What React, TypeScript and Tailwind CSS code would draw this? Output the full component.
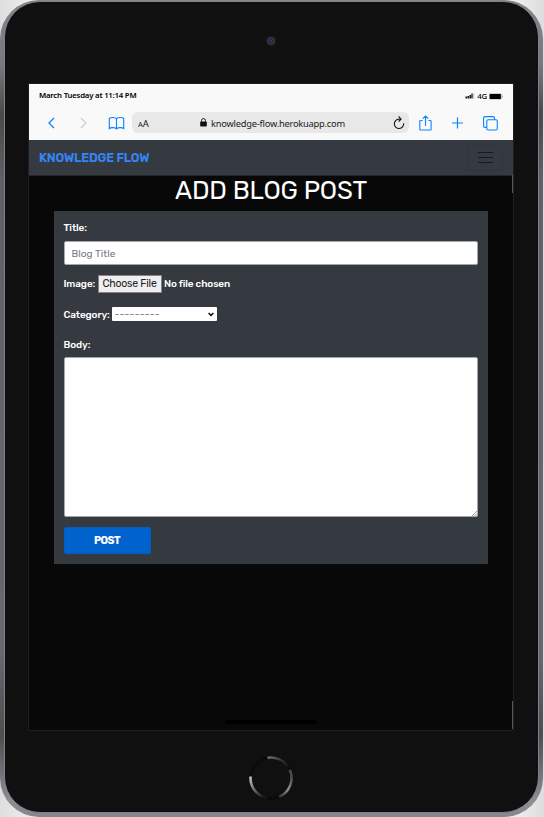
import React from "react";

const ui = "font-['Noto_Sans','Open_Sans',sans-serif]";

function StatusBar() {
  return (
    <div className={`flex h-[24px] items-center justify-between pl-[10px] pr-[10px] text-black ${ui}`}>
      <span className="mb-[3px] whitespace-nowrap text-[7.8px] font-semibold leading-[10px] tracking-[-0.220px]">March Tuesday at 11:14 PM</span>
      <div className="flex items-center">
        <svg width="10" height="6" viewBox="0 0 10 6" className="mr-[2px]">
          <rect x="0.5" y="3.5" width="1.4" height="2" />
          <rect x="2.5" y="3" width="1.4" height="2.5" />
          <rect x="4.5" y="2" width="1.4" height="3.5" />
          <rect x="6.4" y="0.5" width="1.2" height="5" />
          <rect x="8.3" y="0" width="1" height="5.5" fill="#c4c4c4" />
        </svg>
        <span className="mr-[2px] text-[7.8px] font-medium leading-[10px] tracking-[-0.2px]">4G</span>
        <svg width="14" height="7" viewBox="0 0 14 7">
          <rect x="0" y="0.5" width="12.6" height="6" rx="1" fill="#a8a8a8" />
          <rect x="0.8" y="1" width="11" height="5" rx="0.5" />
          <rect x="13" y="2.5" width="0.7" height="2" fill="#888" />
        </svg>
      </div>
    </div>
  );
}

function Toolbar() {
  return (
    <div className={`flex h-[32px] pt-[4px] text-[#0a84ff] ${ui}`}>
      <svg className="shrink-0" width="103" height="22" viewBox="0 0 103 22" fill="none" stroke="currentColor" strokeWidth="1.1">
        <path d="M25 6 20 11l5 5" strokeWidth="1.3" />
        <path d="m52 6 5 5-5 5" stroke="#c9c9c9" />
        <path d="M87.500 7c-.8-1.800-5.800-2-7.200-.5v10c1.400-1.200 6.200-1.200 7.200.5 1-1.700 5.800-1.700 7.200-.5v-10c-1.400-1.500-6.400-1.300-7.200.5v10" />
      </svg>
      <div className="flex h-[21px] w-[277px] shrink-0 items-center rounded-[6px] bg-[#e8e8e8] pl-[6px] text-[#202020]">
        <span className="w-[62px] whitespace-nowrap leading-[20px]">
          <span className="text-[7.5px]">A</span><span className="text-[9.5px]">A</span>
        </span>
        <svg width="7" height="9" viewBox="0 0 7 9" className="mr-[4px]">
          <rect x="0.2" y="3.5" width="6.6" height="5" rx="0.8" fill="#111" />
          <path d="M1.500 4V2.600a2 2 0 0 1 4 0V4" fill="none" stroke="#222" strokeWidth="1" />
        </svg>
        <span className="w-[134px] whitespace-nowrap pt-[2px] text-[9.3px] leading-[20px] tracking-[-0.220px]">knowledge-flow.herokuapp.com</span>
        <svg width="14" height="16" viewBox="0 0 14 16" className="ml-[47px]" fill="none" stroke="#161616" strokeWidth="1.1">
          <path d="M11.700 8.300A4.700 4.700 0 1 1 7 4.100h1.700" />
          <path d="m6.600 1.300 2.500 2.800-2.500 2.400" />
        </svg>
      </div>
      <svg className="ml-[9px] shrink-0" width="46" height="22" viewBox="0 0 46 22" fill="none" stroke="currentColor" strokeWidth="1.1">
        <path d="M4.500 8.500H2.600a.8.8 0 0 0-.8.8v7.900a.8.8 0 0 0 .8.800h9.700a.8.8 0 0 0 .8-.800V9.300a.8.8 0 0 0-.8-.800H10.400M7.500 14V4M4.700 6.700 7.500 4l2.800 2.700" />
        <path d="M39.500 5.500v11M34 11h11" strokeWidth="1.2" />
      </svg>
      <svg className="ml-[19px] mt-[4px] shrink-0" width="16" height="16" viewBox="0 0 16 16" fill="none" stroke="currentColor" strokeWidth="1.1">
        <path d="M11.500 3.700V2A1.400 1.400 0 0 0 10.100.6H2A1.400 1.400 0 0 0 .6 2v8A1.400 1.400 0 0 0 2 11.400h1.700" />
        <rect x="3.800" y="3.700" width="10.500" height="10.300" rx="1.400" />
      </svg>
    </div>
  );
}

function Navbar() {
  return (
    <div className="flex h-[36px] items-center justify-between border-b border-[#22262b] bg-[#343a40] pl-[10px] pr-[10px]">
      <span className="whitespace-nowrap pt-px text-[12.5px] font-semibold leading-none tracking-[-0.220px] text-[#3485f7]">KNOWLEDGE FLOW</span>
      <button aria-label="Menu" className="flex h-[26px] w-[36px] flex-col items-center justify-center gap-[4px] rounded-[3px] border border-[#30363c]">
        <span className="h-px w-[15px] bg-[#171a1d]" />
        <span className="h-px w-[15px] bg-[#171a1d]" />
        <span className="h-px w-[15px] bg-[#171a1d]" />
      </button>
    </div>
  );
}

function BlogForm() {
  return (
    <form className="ml-[24.500px] mr-[25px] h-[353px] bg-[#343a40] px-[10px] text-[10px] font-medium leading-[12px] tracking-[-0.120px] text-white">
      <div className="pt-[11px]">
        <label className="block">Title:</label>
        <input placeholder="Blog Title" className="mt-[7px] block h-[24px] w-full rounded-[2px] border border-[#a4a8ad] bg-white px-[7px] pt-px text-[10px] font-normal tracking-[0.080px] text-black outline-none placeholder:text-[#74797e]" />
      </div>
      <div className="mt-[10px] flex h-[18px] items-center">
        <span className="w-[34px] whitespace-nowrap">Image:</span>
        <button type="button" className="flex h-[18px] w-[64px] items-center justify-center whitespace-nowrap border border-[#858585] bg-[#efefef] text-[10.5px] font-normal tracking-[-0.200px] text-[#222]">Choose File</button>
        <span className="ml-[2.500px] whitespace-nowrap">No file chosen</span>
      </div>
      <div className="mt-[14px] flex h-[14px] items-center">
        <span className="w-[48px] whitespace-nowrap pt-px">Category:</span>
        <div className="flex h-[14px] w-[105px] items-center justify-between rounded-[1px] bg-white pl-[3px] pr-[3px] text-[10px] font-normal text-[#85898d]">
          <span className="tracking-[0.200px]">---------</span>
          <svg width="6" height="5" viewBox="0 0 6 5"><path d="m.6 1 2.400 2.400L5.400 1" fill="none" stroke="#000" strokeWidth="1.4" /></svg>
        </div>
      </div>
      <label className="mt-[18px] block">Body:</label>
      <div className="relative mt-[6px]">
        <textarea className="block h-[160px] w-full resize-none rounded-[2px] border border-[#a4a8ad] bg-white outline-none" />
        <svg className="absolute bottom-[1px] right-[1px]" width="5" height="5" viewBox="0 0 5 5" stroke="#777" strokeWidth="0.7">
          <path d="M0 5 5 0M2.500 5 5 2.500" />
        </svg>
      </div>
      <button type="button" className="mt-[10px] flex h-[27px] w-[87px] items-center justify-center rounded-[2px] border border-[#075cbf] bg-[#0062cc] pt-px text-[10.5px] font-bold tracking-[-0.500px]">POST</button>
    </form>
  );
}

export default function App() {
  return (
    <div className="h-[817px] w-[544px] overflow-hidden bg-[linear-gradient(90deg,#dedede,#fff_12%,#fff_90%,#ddd)] font-['Rubik','Roboto',sans-serif]">
      <div className="h-[817px] w-[543px] rounded-[39px] bg-[linear-gradient(180deg,#85868c_0%,#77787d_8%,#48494c_14%,#606166_22%,#67686d_80%,#4d4e52_90%,#8d8d93_98%,#85868c_100%)] pl-[4px] pr-[4px] pt-px">
        <div className="relative h-[812px] w-[535px] rounded-[36px] border border-[#808187] bg-[#101010] pl-[23px] pt-[81px]">
          <div className="absolute left-[261px] top-[34px] size-[10px] rounded-full bg-[radial-gradient(circle_at_50%_50%,#2b4e99_0%,#172448_22%,#34373c_36%,#252527_60%,#1b1b1b_70%)]" />
          <div className="h-[648px] w-[486px] border border-[#1f1f1f] bg-[#080808]">
            <div className="h-[56px] bg-[#f9f9f9]">
              <StatusBar />
              <Toolbar />
            </div>
            <Navbar />
            <h1 className="h-[35px] whitespace-nowrap text-center text-[25.5px] font-normal leading-[28px] tracking-[-0.200px] text-white">ADD BLOG POST</h1>
            <BlogForm />
            <div className="mx-auto mt-[156px] h-[4px] w-[92px] rounded-full bg-black" />
          </div>
          <div className="absolute right-[25px] top-[173px] h-[18px] w-px bg-[#585858]" />
          <div className="absolute right-[25px] top-[699px] h-[28px] w-px bg-[#585858]" />
          <svg className="absolute left-[243px] top-[753px]" width="46" height="46" viewBox="0 0 46 46" fill="none" strokeWidth="2.6">
            <defs>
              <linearGradient id="homeLeft" x1="0" y1="0" x2="0.7" y2="1"><stop stopColor="#c4c4c8" /><stop offset="1" stopColor="#18181b" /></linearGradient>
              <linearGradient id="homeTop"><stop stopColor="#727277" /><stop offset="1" stopColor="#161617" /></linearGradient>
              <linearGradient id="homeRight" x1="0.5" y1="0" x2="0" y2="1"><stop stopColor="#4a4a4d" /><stop offset="0.5" stopColor="#8c8c91" /><stop offset="1" stopColor="#313134" /></linearGradient>
            </defs>
            <circle cx="23" cy="23" r="20.5" stroke="#0b0b0f" />
            <path d="M2.600 21.500A20.500 20.500 0 0 0 19 43.100" stroke="url(#homeLeft)" />
            <path d="M19.500 2.800A20.500 20.500 0 0 1 40 11.500" stroke="url(#homeTop)" />
            <path d="M41.800 14.800A20.500 20.500 0 0 1 31 41.900" stroke="url(#homeRight)" />
          </svg>
        </div>
      </div>
    </div>
  );
}
